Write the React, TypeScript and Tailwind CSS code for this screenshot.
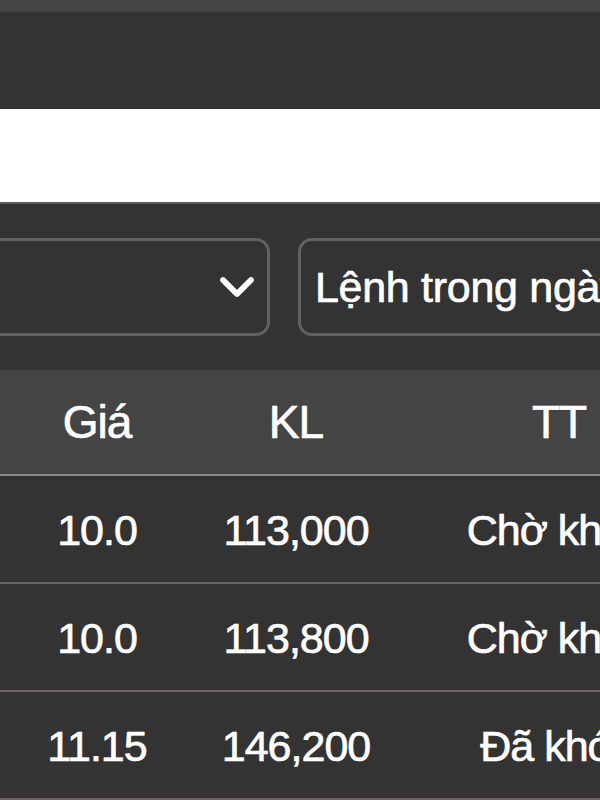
import { ChevronDown } from "lucide-react";

type OrderRow = {
  price: string;
  qty: string;
  status: string;
};

const rows: OrderRow[] = [
  { price: "10.0", qty: "113,000", status: "Chờ khớp" },
  { price: "10.0", qty: "113,800", status: "Chờ khớp" },
  { price: "11.15", qty: "146,200", status: "Đã khớp" },
];

export default function App() {
  return (
    <div
      className="h-[800px] w-[600px] overflow-hidden bg-[#333333] text-white [-webkit-text-stroke:0.7px_white]"
      style={{ fontFamily: '"Liberation Sans", Arial, sans-serif' }}
    >
      {/* top bar */}
      <div className="h-[12px] bg-[#454545]" />
      <div className="h-[97px] bg-[#333333] shadow-[0_2px_3px_rgba(0,0,0,0.35)]" />

      {/* search strip */}
      <div className="h-[93px] bg-white" />
      <div className="h-[2px] bg-[#5a5a5a]" />

      {/* filters */}
      <div className="flex gap-[28px] overflow-hidden pt-[34px]">
        <div className="-ml-[20px] flex h-[98px] w-[290px] shrink-0 items-center justify-end rounded-[14px] border-[3px] border-[#616161] pr-[2px]">
          <ChevronDown size={56} strokeWidth={2.5} className="text-white" />
        </div>
        <div className="flex h-[98px] w-[420px] shrink-0 items-center rounded-[14px] border-[3px] border-[#616161] pl-[14px]">
          <span className="whitespace-nowrap text-[43px] tracking-[-0.3px]">Lệnh trong ngày</span>
        </div>
      </div>

      {/* table */}
      <div className="mt-[34px] w-[720px]">
        <div className="grid h-[106px] grid-cols-[194px_204px_322px] items-center border-b-2 border-[#8a8a8a] bg-[#444444] text-[46px] tracking-[-1px]">
          <div className="text-center">Giá</div>
          <div className="text-center">KL</div>
          <div className="text-center">TT</div>
        </div>
        {rows.map((r, i) => (
          <div
            key={i}
            className="grid h-[108px] grid-cols-[194px_204px_322px] items-center border-b-2 border-[#6a6365] pt-[3px] text-[43px] tracking-[-1px]"
          >
            <div className="text-center">{r.price}</div>
            <div className="text-center">{r.qty}</div>
            <div className="whitespace-nowrap text-center">{r.status}</div>
          </div>
        ))}
      </div>
    </div>
  );
}
